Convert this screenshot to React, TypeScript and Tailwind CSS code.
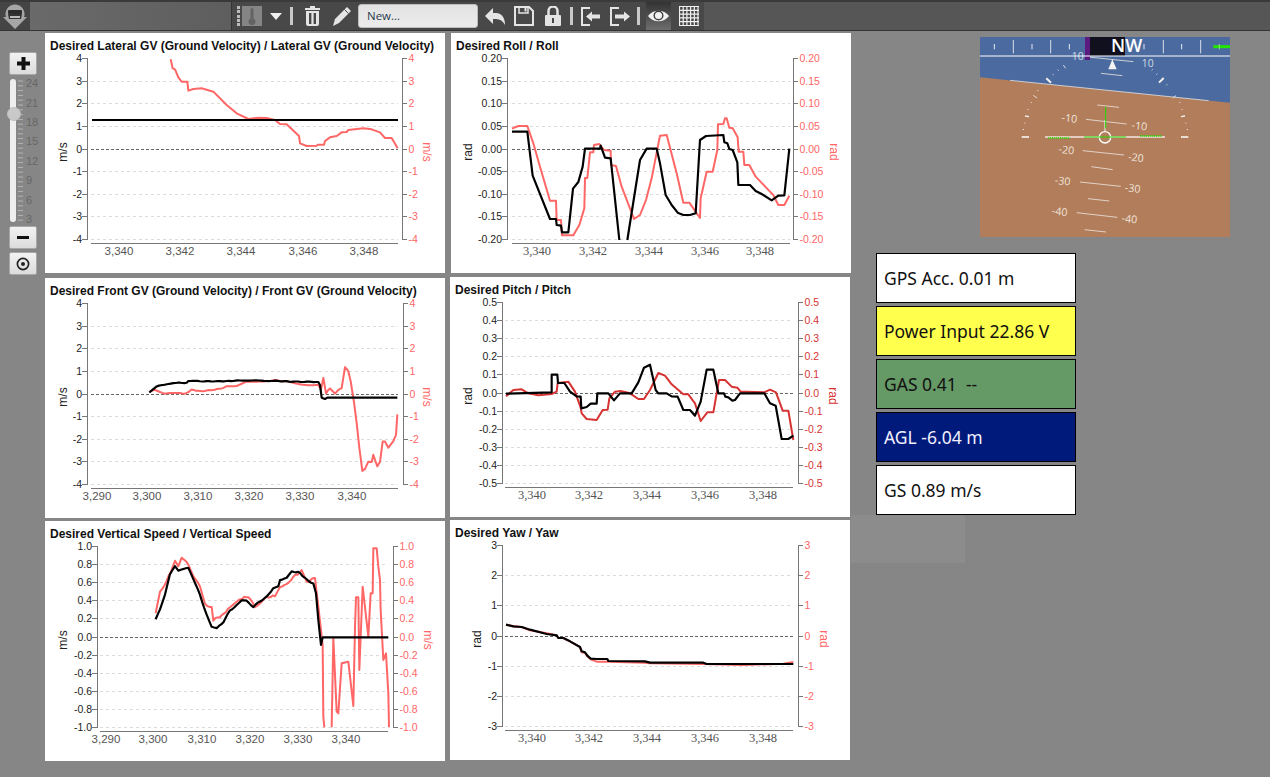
import type { ReactNode } from "react";

type ChartProps = {
    title: string;
    cx: number;
    cy: number;
    leftX: number;
    rightX: number;
    top: number;
    bottom: number;
    axisY: number;
    start: number;
    end: number;
    unit: string;
    unitLeftX: number;
    unitRightX: number;
    yLabels: string[];
    xLabels: [string, number][];
    xFont: string;
    rightColor: string;
    ox: number;
    oy: number;
    red: string;
    black: string;
};

const gv = ["4", "3", "2", "1", "0", "-1", "-2", "-3", "-4"];
const roll = ["0.20", "0.15", "0.10", "0.05", "0.00", "-0.05", "-0.10", "-0.15", "-0.20"];
const pitch = ["0.5", "0.4", "0.3", "0.2", "0.1", "0.0", "-0.1", "-0.2", "-0.3", "-0.4", "-0.5"];
const vs = ["1.0", "0.8", "0.6", "0.4", "0.2", "0.0", "-0.2", "-0.4", "-0.6", "-0.8", "-1.0"];
const yaw = ["3", "2", "1", "0", "-1", "-2", "-3"];

const SANS = "Liberation Sans";
const SERIF = "Liberation Serif";

// the long recordings are noisy, add some wobble up to x = limit
function wobble(points: string, amp: number, limit: number) {
    const list = points.split(" ").map((s) => s.split(",").map(Number));
    const out: string[] = [];
    list.forEach(([x, y], i) => {
        const next = list[i + 1];
        if (!next || x >= limit) {
            out.push(`${x},${y}`);
            return;
        }
        const n = Math.max(1, Math.round((next[0] - x) / 7));
        for (let k = 0; k < n; k++) {
            const px = x + ((next[0] - x) * k) / n;
            const py = y + ((next[1] - y) * k) / n;
            out.push(`${px.toFixed(1)},${(py + amp * Math.sin(px * 1.3) * Math.cos(px * 0.37)).toFixed(1)}`);
        }
    });
    return out.join(" ");
}

function Chart(p: ChartProps) {
    const step = (p.bottom - p.top) / (p.yLabels.length - 1);
    const titleH = 20;
    const midY = (p.top + p.bottom) / 2 + 3.5;

    return (
        <div className="flex h-[240px] w-[400px] flex-col bg-white">
            <div className="h-[20px] whitespace-nowrap pl-[5px] pt-[6px] text-[12px] font-bold leading-[15px] text-[#111]">
                {p.title}
            </div>
            <svg className="block h-[220px] w-[400px]" viewBox={`${p.cx} ${p.cy + titleH} 400 220`}>
                {p.yLabels.map((label, i) => {
                    const y = Math.round(p.top + i * step) + 0.5;
                    const zero = Number(label) === 0;
                    return (
                        <g key={label}>
                            {i > 0 && (
                                <line
                                    x1={p.start}
                                    x2={p.end}
                                    y1={y}
                                    y2={y}
                                    stroke={zero ? "#666" : "#dcdcdc"}
                                    strokeWidth={1}
                                    strokeDasharray={zero ? "3 2" : "3 3"}
                                />
                            )}
                            <line x1={p.leftX - 5} x2={p.leftX} y1={y} y2={y} stroke="#777" />
                            <line x1={p.rightX} x2={p.rightX + 5} y1={y} y2={y} stroke="#777" />
                            <text x={p.leftX - 5} y={y + 3.5} textAnchor="end" fontSize={10.5} fill="#222" fontFamily={SANS}>
                                {label}
                            </text>
                            <text x={p.rightX + 6.5} y={y + 3.5} fontSize={10.5} fill={p.rightColor} fontFamily={SANS}>
                                {label}
                            </text>
                        </g>
                    );
                })}
                <line x1={p.leftX + 0.5} x2={p.leftX + 0.5} y1={p.top} y2={p.bottom + 1} stroke="#777" />
                <line x1={p.rightX + 0.5} x2={p.rightX + 0.5} y1={p.top} y2={p.bottom + 1} stroke="#777" />
                <line x1={p.start} x2={p.end} y1={p.axisY + 0.5} y2={p.axisY + 0.5} stroke="#777" />
                {p.xLabels.map(([label, x]) => (
                    <text
                        key={label}
                        x={x}
                        y={p.axisY + 12}
                        textAnchor="middle"
                        fontSize={p.xFont === SERIF ? 12.5 : 11.5}
                        fill="#555"
                        fontFamily={p.xFont}
                    >
                        {label}
                    </text>
                ))}
                <text
                    transform={`translate(${p.unitLeftX} ${midY}) rotate(-90)`}
                    y={4}
                    textAnchor="middle"
                    fontSize={12}
                    fill="#222"
                    fontFamily={SANS}
                >
                    {p.unit}
                </text>
                <text
                    transform={`translate(${p.unitRightX} ${midY}) rotate(90)`}
                    y={4}
                    textAnchor="middle"
                    fontSize={12}
                    fill={p.rightColor}
                    fontFamily={SANS}
                >
                    {p.unit}
                </text>
                {/* traces are in 3x coordinates from ox,oy, "|" breaks a line where it leaves the plot */}
                <g transform={`translate(${p.ox} ${p.oy}) scale(${1 / 3})`} fill="none" strokeLinejoin="round">
                    {p.red.split("|").map((points) => (
                        <polyline key={points} points={points} stroke={p.rightColor} strokeWidth={6} />
                    ))}
                    {p.black.split("|").map((points) => (
                        <polyline key={points} points={points} stroke="#000" strokeWidth={6.5} />
                    ))}
                </g>
            </svg>
        </div>
    );
}

function Tool({ w, h, viewBox, className, children }: { w: number; h: number; viewBox: string; className: string; children: ReactNode }) {
    return (
        <svg width={w} height={h} viewBox={viewBox} className={`shrink-0 ${className}`}>
            {children}
        </svg>
    );
}

function Sep({ className }: { className: string }) {
    return <div className={`h-[18px] w-[3px] shrink-0 bg-[#c8c8c8] ${className}`} />;
}

function Toolbar() {
    const ic = "#e4e4e4";
    const bg = "#484848";
    return (
        <header className="flex h-[31px] shrink-0 border-b border-[#333] border-t-[2px] border-t-[#3a3a3a] bg-[#5c5c5c]">
            <div className="flex w-[30px] items-center justify-center bg-[#454545]">
                <svg width="26" height="26" viewBox="0 0 26 26">
                    <path d="M4 14 A9.5 9.5 0 1 1 22 14 L25 14 L13 26 L1 14 Z" fill="#a6a6a6" />
                    <rect x="6" y="7" width="14" height="4" rx="1" fill="#2c2c2c" />
                    <path d="M6 11 h14 l-1 5 h-12 z" fill="#333" />
                    <rect x="8" y="13" width="10" height="2" fill="#bbb" />
                </svg>
            </div>
            <div className="w-[201px] bg-gradient-to-r from-[#6a6a6a] to-[#5e5e5e]" />
            <div className="flex h-full w-[473px] items-center border-l border-[#333] bg-[#484848]">
                <div className="ml-[5px] flex h-[20px] w-[3px] shrink-0 flex-col justify-between">
                    <span className="h-[3px] bg-[#bbb]" />
                    <span className="h-[3px] bg-[#bbb]" />
                    <span className="h-[3px] bg-[#bbb]" />
                    <span className="h-[3px] bg-[#bbb]" />
                    <span className="h-[3px] bg-[#bbb]" />
                </div>
                <div className="ml-[2px] flex h-[20px] w-[20px] shrink-0 items-center justify-center bg-[#858585]">
                    <svg width="8" height="17" viewBox="0 0 8 17">
                        <path d="M2.5 1.5a1.5 1.5 0 0 1 3 0v9a3.5 3.5 0 1 1-3 0z" fill="#636363" />
                    </svg>
                </div>
                <Tool w={12} h={7} viewBox="0 0 12 7" className="ml-[8px]">
                    <path d="M0 0h12L6 7z" fill="#f0f0f0" />
                </Tool>
                <Sep className="ml-[8px]" />
                <Tool w={15} h={20} viewBox="0 0 15 20" className="ml-[12px]">
                    <path d="M5 0h5v2h5v2H0V2h5z" fill={ic} />
                    <path fillRule="evenodd" d="M1 5h13v13a2 2 0 0 1-2 2H3a2 2 0 0 1-2-2zM4 7v11h2.4V7zM8.600 7v11H11V7z" fill={ic} />
                </Tool>
                <Tool w={20} h={20} viewBox="0 0 20 20" className="ml-[12px]">
                    <path d="M15 1l4 4L7 17l-6 3 2-7z" fill={ic} />
                    <path d="M12.5 3.5l4 4" stroke={bg} strokeWidth={1} />
                </Tool>
                <div className="ml-[6px] flex h-[24px] w-[120px] shrink-0 items-center rounded-[3px] border border-[#bdbdbd] bg-gradient-to-b from-[#e2e2e2] to-[#ececec] pl-[8px] font-['Open_Sans',sans-serif] text-[11.5px] text-[#2a3a4a]">
                    New...
                </div>
                <Tool w={20} h={17} viewBox="0 0 20 17" className="ml-[7px]">
                    <path d="M0 8l8-8v5h3c6 0 9 5 9 12-2-4-5-6-9-6H8v5z" fill={ic} />
                </Tool>
                <Tool w={20} h={20} viewBox="0 0 20 20" className="ml-[9px]">
                    <path d="M1 1h14l4 4v14H1z" fill="none" stroke={ic} strokeWidth={2} />
                    <path d="M5 1v6h9V1" fill="none" stroke={ic} strokeWidth={1.5} />
                    <rect x="10.5" y="2" width="2" height="3.5" fill={ic} />
                </Tool>
                <Tool w={16} h={20} viewBox="0 0 16 20" className="ml-[11px]">
                    <path d="M3.5 9V5a4.5 4.5 0 0 1 9 0v4" fill="none" stroke={ic} strokeWidth={2.5} />
                    <path fillRule="evenodd" d="M1 9h14a1 1 0 0 1 1 1v9a1 1 0 0 1-1 1H1a1 1 0 0 1-1-1v-9a1 1 0 0 1 1-1zM7 12v5h2v-5z" fill={ic} />
                </Tool>
                <Sep className="ml-[9px]" />
                <Tool w={19} h={19} viewBox="0 0 19 19" className="ml-[8px]">
                    <path d="M9 1H1v17h8" fill="none" stroke={ic} strokeWidth={2} />
                    <path d="M5 9.5l6-5v3h8v4h-8v3z" fill={ic} />
                </Tool>
                <Tool w={20} h={19} viewBox="0 0 20 19" className="ml-[10px]">
                    <path d="M9 1H1v17h8" fill="none" stroke={ic} strokeWidth={2} />
                    <path d="M20 9.5l-6-5v3H5v4h9v3z" fill={ic} />
                </Tool>
                <Sep className="ml-[7px]" />
                <div className="ml-[6px] flex h-full w-[25px] shrink-0 items-center justify-center bg-gradient-to-b from-[#333] to-[#6e6e6e]">
                    <svg width="21" height="14" viewBox="0 0 21 14">
                        <path d="M0 7C5 0 16 0 21 7 16 14 5 14 0 7z" fill="#f2f2f2" />
                        <circle cx="10.5" cy="6.5" r="5" fill="#3d3d3d" />
                        <circle cx="10.5" cy="6.5" r="3.6" fill="#f2f2f2" />
                    </svg>
                </div>
                <Tool w={20} h={20} viewBox="0 0 20 20" className="ml-[8px]">
                    <path
                        d="M.5 0v20M4.2 0v20M7.900 0v20M11.600 0v20M15.300 0v20M19 0v20M0 .5h20M0 4.300h20M0 8.100h20M0 11.900h20M0 15.700h20M0 19.500h20"
                        stroke="#f0f0f0"
                        strokeWidth={1.2}
                    />
                </Tool>
            </div>
            <div className="flex-1 bg-[#565656]" />
        </header>
    );
}

function RailButton({ className, children }: { className: string; children: ReactNode }) {
    return (
        <div className={`flex h-[23px] w-[28px] items-center justify-center rounded-[2px] border border-[#a8a8a8] bg-gradient-to-b from-[#f2f2f2] to-[#dcdcdc] ${className}`}>
            {children}
        </div>
    );
}

function ZoomRail() {
    const labels: [string, number][] = [
        ["24", 83],
        ["21", 103],
        ["18", 122],
        ["15", 141],
        ["12", 161],
        ["9", 180],
        ["6", 200],
        ["3", 219],
    ];
    const ticks = Array.from({ length: 30 }, (_, i) => 2 + i * 4.8);

    return (
        <aside className="flex w-[45px] shrink-0 flex-col pl-[9px] pt-[21px]">
            <RailButton className="">
                <svg width="13" height="13" viewBox="0 0 13 13">
                    <path d="M4.500 0h4v4.500H13v4H8.500V13h-4V8.500H0v-4h4.500z" fill="#111" />
                </svg>
            </RailButton>
            <svg className="mt-[4px] ml-[-9px] block overflow-visible" width="36" height="145" viewBox="0 79 36 145">
                <rect x="10" y="79" width="6" height="143" rx="3" fill="#eeeeee" />
                {ticks.map((y) => (
                    <line key={y} x1="18" x2="23" y1={79 + y} y2={79 + y} stroke="#b4b4b4" strokeWidth="1" />
                ))}
                {labels.map(([label, y]) => (
                    <text key={label} x="26" y={y + 4} fontSize="11" fill="#666" fontFamily={SANS}>
                        {label}
                    </text>
                ))}
                <circle cx="14" cy="114" r="6.5" fill="#c9c9c9" stroke="#bdbdbd" />
            </svg>
            <RailButton className="mt-[2px]">
                <div className="h-[3px] w-[12px] bg-[#111]" />
            </RailButton>
            <RailButton className="mt-[3px]">
                <svg width="14" height="14" viewBox="0 0 14 14">
                    <circle cx="7" cy="7" r="5.600" fill="none" stroke="#222" strokeWidth="1.700" />
                    <circle cx="7" cy="7" r="2" fill="#222" />
                </svg>
            </RailButton>
        </aside>
    );
}

function Hud() {
    const white = "#f4f0ee";
    const tiny: number[][] = [
        [280, 105, 287, 115],
        [263, 119, 266, 122],
        [248, 133, 251, 135],
        [548, 118, 545, 121],
        [562, 131, 559, 134],
        [592, 163, 589, 166],
        [618, 197, 608, 204],
        [205, 180, 202, 183],
        [190, 196, 201, 204],
        [185, 216, 183, 219],
        [175, 237, 173, 240],
        [628, 216, 631, 219],
        [635, 237, 638, 240],
        [163, 279, 166, 280],
        [646, 279, 649, 280],
        [158, 298, 162, 299],
        [650, 298, 654, 299],
    ];
    const ladder: number[][] = [
        [345, 80, 490, 95],
        [393, 130, 457, 137],
        [382, 225, 447, 232],
        [348, 268, 470, 282],
        [338, 362, 462, 375],
        [364, 410, 428, 419],
        [330, 456, 452, 469],
        [354, 506, 418, 513],
        [320, 548, 442, 562],
        [344, 599, 408, 606],
    ];
    const marks: [string, number, number][] = [
        ["-10", 297, 276],
        ["-10", 507, 299],
        ["-20", 288, 371],
        ["-20", 497, 394],
        ["-30", 277, 464],
        ["-30", 487, 486],
        ["-40", 268, 556],
        ["-40", 477, 578],
    ];

    return (
        <svg className="ml-[129px] mt-[6px] block h-[200px] w-[250px] shrink-0" viewBox="30 21 750 600" fontFamily="Open Sans">
            <rect x="30" y="21" width="750" height="600" fill="#4b6ba0" />
            <path d="M30 142L780 218V621H30z" fill="#b17d5b" />
            <line x1="120" y1="151" x2="716" y2="212" stroke="#dfe3ea" strokeWidth="3" opacity="0.8" />

            {ladder.map(([x1, y1, x2, y2]) => (
                <line key={y1} x1={x1} y1={y1} x2={x2} y2={y2} stroke="#efe6e0" strokeOpacity="0.8" strokeWidth="3" />
            ))}
            {marks.map(([label, x, y]) => (
                <text key={x} x={x} y={y} transform={`rotate(6 ${x} ${y})`} textAnchor="middle" fontSize="32" fill="#f0e4da">
                    {label}
                </text>
            ))}
            <text x="323" y="90" textAnchor="middle" fontSize="31" fill="#e8ecf2" opacity="0.85">10</text>
            <text x="533" y="111" textAnchor="middle" fontSize="31" fill="#e8ecf2" opacity="0.85">10</text>

            {tiny.map(([x1, y1, x2, y2]) => (
                <line key={`${x1}-${y1}`} x1={x1} y1={y1} x2={x2} y2={y2} stroke={white} strokeWidth="3" opacity="0.85" />
            ))}
            <line x1="229" y1="145" x2="243" y2="158" stroke={white} strokeWidth="6" />
            <line x1="581" y1="144" x2="567" y2="158" stroke={white} strokeWidth="6" />
            <line x1="165" y1="258" x2="177" y2="260" stroke={white} strokeWidth="4" />
            <line x1="633" y1="260" x2="645" y2="258" stroke={white} strokeWidth="4" />
            <path d="M427 88l-12 30h25z" fill="#f4f4f4" />

            <rect x="360" y="21" width="105" height="57" fill="#10101f" />
            <rect x="345" y="21" width="15" height="69" fill="#5c1a80" />
            {[73, 186, 298, 522, 635].map((x) => (
                <line key={x} x1={x} x2={x} y1="42" y2="58" stroke="#e8ecf2" strokeWidth="3" />
            ))}
            {[130, 242, 580, 692].map((x) => (
                <line key={x} x1={x} x2={x} y1="30" y2="70" stroke="#d8dee8" strokeWidth="3" />
            ))}
            <line x1="30" y1="78" x2="780" y2="78" stroke="#fff" strokeWidth="3" />
            <text x="470" y="66" textAnchor="middle" fontSize="54" fontWeight="600" fill="#fff">NW</text>
            <line x1="730" y1="50" x2="780" y2="50" stroke="#22e600" strokeWidth="9" />
            <line x1="748" y1="42" x2="748" y2="58" stroke="#8fe080" strokeWidth="3" />

            <line x1="155" y1="321" x2="177" y2="321" stroke={white} strokeWidth="5" />
            <line x1="633" y1="321" x2="655" y2="321" stroke={white} strokeWidth="5" />
            <line x1="225" y1="321" x2="585" y2="321" stroke="#f5e6de" strokeWidth="5" />
            <line x1="234" y1="324" x2="300" y2="324" stroke="#22dd00" strokeWidth="5" strokeDasharray="4 2" />
            <line x1="510" y1="318" x2="576" y2="318" stroke="#22dd00" strokeWidth="5" strokeDasharray="4 2" />
            <line x1="405" y1="270" x2="405" y2="305" stroke="#f4f4f4" strokeWidth="3" />
            <line x1="407" y1="230" x2="407" y2="295" stroke="#22dd00" strokeWidth="3" />
            <circle cx="405" cy="322" r="17" fill="#b17d5b" stroke="#fff" strokeWidth="4" />
            <line x1="342" y1="321" x2="468" y2="321" stroke="#22dd00" strokeWidth="3" />
        </svg>
    );
}

const readouts = [
    { text: "GPS Acc. 0.01 m", cls: "bg-white text-[#111]" },
    { text: "Power Input 22.86 V", cls: "bg-[#ffff4d] text-[#111]" },
    { text: "GAS 0.41  --", cls: "bg-[#659966] text-[#111]" },
    { text: "AGL -6.04 m", cls: "bg-[#001a7c] text-[#f0f0ff]" },
    { text: "GS 0.89 m/s", cls: "bg-white text-[#111]" },
];

const vsRed =
    "347,275 360,215 380,180 405,125 415,135 425,115 440,125 460,165 480,200 495,250 515,260 520,300 545,290 570,260 600,240 625,230 645,260 680,235 705,225 720,200 740,195 760,170 785,150 800,185 825,170 835,260 848,375 850,590 853,622";
const vsBlack =
    "347,295 360,268 375,225 390,165 405,140 415,150 445,143 460,175 480,225 500,285 515,320 530,325 550,305 570,270 590,255 605,243 620,245 640,262 660,245 680,232 700,205 715,200 720,180 740,175 755,157 775,157 800,178 820,190 828,220 835,300 843,375 848,352 1045,352";
const frontRed =
    "328,350 345,345 375,357 420,354 435,356 455,343 480,348 500,347 540,342 560,335 590,333 620,322 650,320 700,316 740,320 790,330 835,330 843,345 850,310 858,355 870,340 885,355 895,345 905,340 915,275 925,290 932,320 942,380 950,445 958,520 967,587 975,580 985,562 995,560 1000,540 1012,575 1020,560 1028,498 1035,498 1045,520 1060,500 1068,480 1072,418";
const frontBlack =
    "328,352 350,335 370,330 400,323 440,323 445,318 500,319 560,319 600,317 650,316 700,318 760,320 835,321 840,330 845,368 855,372 862,368 1072,368";

export default function App() {
    return (
        <div className="relative flex h-[777px] w-[1270px] flex-col overflow-hidden bg-[#868686] font-['Liberation_Sans',sans-serif]">
            <Toolbar />
            <div className="absolute left-[851px] top-[515px] h-[48px] w-[114px] bg-[#8c8c8c]" />
            <main className="relative flex flex-1">
                <ZoomRail />
                <div className="flex flex-col pt-[2px]">
                    <Chart
                        title="Desired Lateral GV (Ground Velocity) / Lateral GV (Ground Velocity)"
                        cx={45}
                        cy={33}
                        leftX={87}
                        rightX={402}
                        top={58}
                        bottom={239}
                        axisY={243}
                        start={91}
                        end={398}
                        unit="m/s"
                        unitLeftX={63}
                        unitRightX={427}
                        yLabels={gv}
                        xLabels={[["3,340", 119], ["3,342", 180], ["3,344", 241], ["3,346", 303], ["3,348", 364]]}
                        xFont={SANS}
                        rightColor="#ff6666"
                        ox={150}
                        oy={30}
                        red="62,88 68,115 75,118 85,142 95,155 112,155 115,182 130,177 155,175 190,185 230,225 260,250 295,267 325,263 350,264 375,270 390,282 410,283 447,318 450,340 470,348 500,347 505,344 522,344 525,333 540,322 560,318 575,307 590,306 595,300 640,295 665,298 690,307 705,324 725,324 743,355"
                        black="-174,270 744,270"
                    />
                    <div className="mt-[5px]">
                        <Chart
                            title="Desired Front GV (Ground Velocity) / Front GV (Ground Velocity)"
                            cx={45}
                            cy={278}
                            leftX={87}
                            rightX={403}
                            top={303}
                            bottom={484}
                            axisY={488}
                            start={91}
                            end={398}
                            unit="m/s"
                            unitLeftX={63}
                            unitRightX={427}
                            yLabels={gv}
                            xLabels={[["3,290", 97], ["3,300", 147], ["3,310", 198], ["3,320", 249], ["3,330", 300], ["3,340", 352]]}
                            xFont={SANS}
                            rightColor="#ff6666"
                            ox={40}
                            oy={275}
                            red={wobble(frontRed, 2, 1072)}
                            black={wobble(frontBlack, 1.5, 835)}
                        />
                    </div>
                    <div className="mt-[3px]">
                        <Chart
                            title="Desired Vertical Speed / Vertical Speed"
                            cx={45}
                            cy={521}
                            leftX={97}
                            rightX={393}
                            top={546}
                            bottom={727}
                            axisY={731}
                            start={100}
                            end={388}
                            unit="m/s"
                            unitLeftX={63}
                            unitRightX={428}
                            yLabels={vs}
                            xLabels={[["3,290", 106], ["3,300", 153], ["3,310", 202], ["3,320", 250], ["3,330", 298], ["3,340", 346]]}
                            xFont={SANS}
                            rightColor="#ff6666"
                            ox={40}
                            oy={520}
                            red={`${wobble(vsRed, 5, 835)}|875,622 880,355 890,575 895,580 905,430 925,425 940,558 945,320 948,232 955,232 958,450 968,200 985,350 992,220 998,220 1000,85 1010,85 1015,140 1020,180 1022,270 1030,420 1038,400 1045,520 1047,622`}
                            black={wobble(vsBlack, 3, 828)}
                        />
                    </div>
                </div>
                <div className="ml-[5px] flex flex-col pt-[2px]">
                    <div className="ml-px">
                        <Chart
                            title="Desired Roll / Roll"
                            cx={451}
                            cy={33}
                            leftX={507}
                            rightX={793}
                            top={58}
                            bottom={239}
                            axisY={243}
                            start={512}
                            end={790}
                            unit="rad"
                            unitLeftX={468}
                            unitRightX={834}
                            yLabels={roll}
                            xLabels={[["3,340", 537], ["3,342", 593], ["3,344", 649], ["3,346", 705], ["3,348", 760]]}
                            xFont={SERIF}
                            rightColor="#ff6666"
                            ox={450}
                            oy={30}
                            red="186,296 205,288 232,288 250,340 270,410 300,512 318,512 320,570 333,570 336,616 370,616 388,585 403,535 405,444 412,444 420,367 430,367 432,345 448,342 462,360 482,362 483,405 498,408 515,470 552,567 570,555 588,510 605,445 630,317 650,315 680,430 700,518 718,518 750,564 752,505 770,425 788,425 802,360 804,283 820,282 825,265 830,265 838,293 848,295 863,322 866,365 880,365 883,405 898,405 917,440 960,485 970,495 985,525 1003,525 1018,497"
                            black="186,305 232,305 248,437 300,567 318,567 320,585 333,587 336,607 355,607 369,476 385,456 398,410 405,356 450,356 452,347 465,383 482,385 508,630|532,630 570,390 590,356 620,356 630,400 647,495 665,525 683,548 700,555 720,555 737,550 750,330 768,318 820,315 823,337 832,340 838,357 848,360 862,397 865,465 900,465 917,483 935,492 965,511 985,497 1003,496 1018,356"
                        />
                    </div>
                    <div className="mt-[4px]">
                        <Chart
                            title="Desired Pitch / Pitch"
                            cx={450}
                            cy={277}
                            leftX={502}
                            rightX={798}
                            top={302}
                            bottom={483}
                            axisY={487}
                            start={505}
                            end={793}
                            unit="rad"
                            unitLeftX={468}
                            unitRightX={833}
                            yLabels={pitch}
                            xLabels={[["3,340", 532], ["3,342", 589], ["3,344", 647], ["3,346", 705], ["3,348", 763]]}
                            xFont={SERIF}
                            rightColor="#d63333"
                            ox={450}
                            oy={275}
                            red="168,364 190,345 215,343 235,355 265,361 305,357 320,350 323,324 355,320 375,350 392,398 395,415 410,432 440,435 458,405 473,404 478,370 495,350 512,348 540,355 565,372 582,372 600,345 625,294 645,302 665,328 700,358 715,358 735,385 752,438 772,412 790,412 807,315 825,315 845,335 862,338 872,350 890,350 943,352 960,344 978,352 998,407 1015,407 1030,495"
                            black="168,356 305,352 305,299 322,299 324,324 343,324 360,350 380,364 392,365 394,400 410,396 422,386 440,386 442,355 475,355 492,376 510,355 545,355 565,322 582,278 600,269 617,345 625,355 650,355 665,364 683,365 700,405 720,405 735,422 752,380 770,284 790,284 805,355 822,355 826,365 835,367 847,377 855,375 870,355 943,355 960,385 977,392 995,492 1015,492 1030,482"
                        />
                    </div>
                    <div className="mt-[3px]">
                        <Chart
                            title="Desired Yaw / Yaw"
                            cx={450}
                            cy={520}
                            leftX={502}
                            rightX={798}
                            top={545}
                            bottom={726}
                            axisY={730}
                            start={505}
                            end={793}
                            unit="rad"
                            unitLeftX={477}
                            unitRightX={824}
                            yLabels={yaw}
                            xLabels={[["3,340", 532], ["3,342", 589], ["3,344", 647], ["3,346", 705], ["3,348", 763]]}
                            xFont={SERIF}
                            rightColor="#ff6666"
                            ox={450}
                            oy={518}
                            red="168,320 190,325 215,327 240,337 290,346 320,352 325,360 340,360 360,370 390,387 395,403 405,405 412,415 422,424 440,431 472,431 475,431 585,434 600,436 760,438 880,441 1000,437 1030,432"
                            black="168,320 190,325 215,327 240,335 290,348 320,352 325,360 340,360 360,370 390,387 395,400 405,403 412,413 422,422 440,423 472,423 475,429 585,430 600,434 760,434 770,438 1030,438"
                        />
                    </div>
                </div>
                <div className="flex flex-col">
                    <Hud />
                    <div className="ml-[25px] mt-[16px] flex flex-col gap-[3px]">
                        {readouts.map((r) => (
                            <div
                                key={r.text}
                                className={`flex h-[50px] w-[200px] items-center whitespace-pre border border-black pl-[7px] font-['Noto_Sans',sans-serif] text-[17.5px] ${r.cls}`}
                            >
                                {r.text}
                            </div>
                        ))}
                    </div>
                </div>
            </main>
        </div>
    );
}
